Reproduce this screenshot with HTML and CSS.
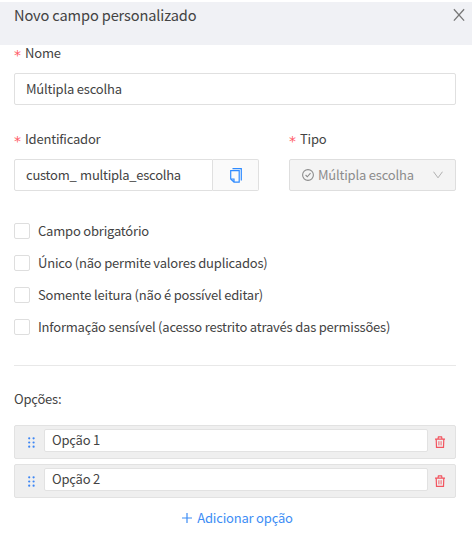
FILE: index.html
```html
<!DOCTYPE html>
<html lang="pt-BR">
<head>
    <meta charset="UTF-8">
    <meta name="viewport" content="width=device-width, initial-scale=1.0">
    <title>Novo campo personalizado</title>
    <link rel="stylesheet" href="styles.css">
</head>
<body>

    <header class="header">
        <h1 class="title">Novo campo personalizado</h1>
        <svg class="close" width="12" height="14" viewBox="0 0 12 14"><path d="M0.9 1.2 L11.1 12.6 M11.1 1.2 L0.9 12.6"/></svg>
    </header>

    <main class="form">
        <div class="field">
            <div class="label"><span class="required">*</span>Nome</div>
            <div class="input">Múltipla escolha</div>
        </div>

        <div class="row">
            <div class="field identifier">
                <div class="label"><span class="required">*</span>Identificador</div>
                <div class="group">
                    <div class="input">custom_ multipla_escolha</div>
                    <div class="addon">
                        <svg class="copy" width="12" height="15" viewBox="0 0 12 15">
                            <path d="M2.5 0.7 H11.3 V12.5"/>
                            <path d="M0.7 2.7 H9.2 V14.2 H4 L0.7 11 Z M0.7 11 H4 V14.2"/>
                        </svg>
                    </div>
                </div>
            </div>
            <div class="field type">
                <div class="label"><span class="required">*</span>Tipo</div>
                <div class="select">
                    <svg class="check" width="12" height="12" viewBox="0 0 12 12"><circle cx="6" cy="6" r="5.4"/><path d="M3.6 6 L5.3 7.8 L8.5 4.1"/></svg>
                    <span>Múltipla escolha</span>
                    <svg class="arrow" width="10" height="8" viewBox="0 0 10 8"><path d="M0.5 0.7 L5 6.8 L9.5 0.7"/></svg>
                </div>
            </div>
        </div>

        <div class="checks">
            <div class="option-check"><span class="box"></span><span>Campo obrigatório</span></div>
            <div class="option-check"><span class="box"></span><span>Único (não permite valores duplicados)</span></div>
            <div class="option-check"><span class="box"></span><span>Somente leitura (não é possível editar)</span></div>
            <div class="option-check"><span class="box"></span><span>Informação sensível (acesso restrito através das permissões)</span></div>
        </div>

        <div class="divider"></div>

        <div class="options-title">Opções:</div>

        <div class="options">
            <div class="option">
                <svg class="drag" width="7" height="11" viewBox="0 0 7 11"><circle cx="1.2" cy="1.3" r="1.1"/><circle cx="5.6" cy="1.3" r="1.1"/><circle cx="1.2" cy="5.5" r="1.1"/><circle cx="5.6" cy="5.5" r="1.1"/><circle cx="1.2" cy="9.7" r="1.1"/><circle cx="5.6" cy="9.7" r="1.1"/></svg>
                <div class="option-input">Opção 1</div>
                <svg class="trash" width="10" height="12" viewBox="0 0 10 12"><path d="M0 3.1 H10 M3 3 L3.4 0.8 H6.6 L7 3 M1.2 3 L1.5 11.3 H8.5 L8.8 3"/><path class="lines" d="M3.9 5.2 V9.4 M6.1 5.2 V9.4"/></svg>
            </div>
            <div class="option">
                <svg class="drag" width="7" height="11" viewBox="0 0 7 11"><circle cx="1.2" cy="1.3" r="1.1"/><circle cx="5.6" cy="1.3" r="1.1"/><circle cx="1.2" cy="5.5" r="1.1"/><circle cx="5.6" cy="5.5" r="1.1"/><circle cx="1.2" cy="9.7" r="1.1"/><circle cx="5.6" cy="9.7" r="1.1"/></svg>
                <div class="option-input">Opção 2</div>
                <svg class="trash" width="10" height="12" viewBox="0 0 10 12"><path d="M0 3.1 H10 M3 3 L3.4 0.8 H6.6 L7 3 M1.2 3 L1.5 11.3 H8.5 L8.8 3"/><path class="lines" d="M3.9 5.2 V9.4 M6.1 5.2 V9.4"/></svg>
            </div>
        </div>

        <div class="add">
            <svg class="plus" width="10" height="10" viewBox="0 0 10 10"><path d="M5 0 V10 M0 5 H10"/></svg>
            <span>Adicionar opção</span>
        </div>
    </main>

</body>
</html>
```
FILE: styles.css
```css
* {
    box-sizing: border-box;
}
body {
    margin: 0;
    background-color: #fff;
    font-family: "Noto Sans CJK SC", "Open Sans", sans-serif;
    font-size: 13px;
    line-height: 20px;
    letter-spacing: -0.2px;
    color: #434343;
    overflow: hidden;
}
svg {
    display: block;
    flex: none;
    fill: none;
}
.header {
    display: flex;
    justify-content: space-between;
    align-items: flex-start;
    height: 43px;
    margin: 2px 2px 0 0;
    padding: 3px 7px 0 14px;
    background-color: #f0f1f5;
}
.title {
    margin: 0;
    font-size: 14.6px;
    font-weight: 400;
    line-height: 20px;
    letter-spacing: -0.13px;
}
.close {
    margin-top: 3px;
    stroke: #777;
    stroke-width: 1.3;
}
.form {
    padding: 0 18px 0 14px;
}
.label {
    display: flex;
    height: 28px;
    line-height: 16px;
}
.required {
    width: 11px;
    font-family: "DejaVu Sans", sans-serif;
    font-size: 14px;
    line-height: 21px;
    color: #ff5a66;
}
.input {
    height: 32px;
    padding-left: 11px;
    border: 1px solid #e0e0e0;
    border-radius: 2px;
    line-height: 30px;
    white-space: pre;
}
.row {
    display: flex;
    gap: 30px;
    margin-top: 26px;
}
.identifier {
    width: 245px;
}
.type {
    flex: 1;
}
.group {
    display: flex;
}
.group .input {
    width: 199px;
    border-radius: 2px 0 0 2px;
    letter-spacing: -0.25px;
    word-spacing: 1px;
}
.addon {
    display: flex;
    flex: 1;
    align-items: center;
    justify-content: center;
    border: 1px solid #e0e0e0;
    border-left: 0;
    border-radius: 0 2px 2px 0;
    background-color: #fafafa;
}
.copy {
    stroke: #2f8bff;
    stroke-width: 1.2;
}
.select {
    display: flex;
    align-items: center;
    height: 32px;
    padding: 0 12px;
    border: 1px solid #dedede;
    border-radius: 2px;
    background-color: #f4f4f4;
    color: #8c8c8c;
}
.check {
    margin-right: 4px;
    stroke: #8c8c8c;
    stroke-width: 1.1;
}
.arrow {
    margin-left: auto;
    stroke: #b0b0b0;
}
.checks {
    display: flex;
    flex-direction: column;
    gap: 12px;
    margin-top: 30px;
}
.option-check {
    display: flex;
    align-items: center;
    gap: 8px;
    height: 20px;
}
.box {
    width: 16px;
    height: 16px;
    border: 1px solid #dedede;
    border-radius: 2px;
}
.divider {
    height: 1px;
    margin-top: 28px;
    background-color: #e8e8e8;
}
.options-title {
    margin-top: 23px;
}
.options {
    display: flex;
    flex-direction: column;
    gap: 5px;
    margin-top: 16px;
}
.option {
    display: flex;
    align-items: flex-start;
    height: 34px;
    padding: 3px 10px 0 13px;
    border: 1px solid #e2e2e2;
    border-radius: 2px;
    background-color: #efefef;
}
.drag {
    margin-top: 8px;
    fill: #3c86f5;
}
.option-input {
    flex: 1;
    height: 23px;
    margin: 0 7px 0 9px;
    padding-left: 7px;
    border: 1px solid #e2e2e2;
    border-radius: 2px;
    background-color: #fff;
    line-height: 20px;
}
.trash {
    margin-top: 7px;
    stroke: #f25560;
    stroke-width: 1.2;
}
.lines {
    stroke-width: 0.9;
}
.add {
    display: flex;
    align-items: center;
    justify-content: center;
    gap: 5px;
    margin-top: 10px;
    padding-left: 5px;
    color: #3d8df5;
}
.plus {
    stroke: #3d8df5;
    stroke-width: 1.2;
}
```
